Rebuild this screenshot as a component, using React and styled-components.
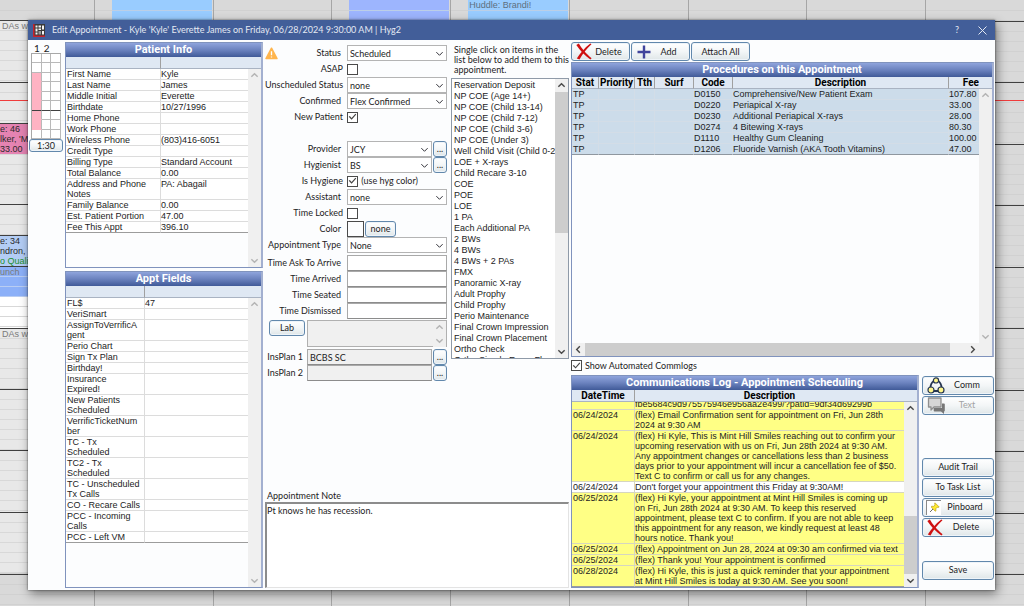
import React from "react";
import styled, { createGlobalStyle, css } from "styled-components";

const GlobalStyle = createGlobalStyle`
  *, *::before, *::after { box-sizing: border-box; }
  body { margin: 0; background: #d9d9d9; }
  body, button, input, select, textarea {
    font-family: "Lato", "Liberation Sans", sans-serif;
    font-size: 9px;
    line-height: 10px;
    color: #1c1c24;
  }
`;

const gridFont = css`
  font-family: "Liberation Sans", Arial, sans-serif;
  font-size: 9px;
  line-height: 10px;
`;

/* ---------- schedule behind the dialog ---------- */

const Desktop = styled.div`
  position: relative;
  min-height: 100vh;
  display: flex;
  padding: 20px 29px 16px 28px;
  overflow: hidden;
`;

const Schedule = styled.div`
  position: absolute;
  inset: 0;
  display: grid;
`;

const Hours = styled.div`
  grid-area: 1 / 1;
  display: grid;
  grid-template-rows: 21px repeat(9, 1fr) 32px;
`;

const Hour = styled.div`
  border-top: 1px solid ${(p) => (p.$first ? "#d9d9d9" : "#404040")};
  background: repeating-linear-gradient(#d9d9d9 0 9px, #d1d1d1 9px 10px);
`;

const Operatories = styled.div`
  grid-area: 1 / 1;
  display: grid;
  grid-template-columns: 95px repeat(7, 1fr) 98px;
`;

const Operatory = styled.div`
  border-right: 1px solid #a6a6a6;
  padding-right: 1px;
`;

const OpBlock = styled.div`
  height: 21px;
  margin-left: 17px;
  padding-left: 1px;
  background: repeating-linear-gradient(${(p) => p.$color} 0 10px, #bccfe6 10px 11px);
  color: #5d6f80;
  ${gridFont}
`;

const NowLine = styled.div`
  grid-area: 1 / 1;
  margin-top: 100px;
  height: 1px;
  background: #f03c3c;
`;

const DayColumn = styled.div`
  grid-area: 1 / 1;
  width: 28px;
  padding-top: 20px;
  overflow: hidden;
`;

const DayBlock = styled.div`
  height: ${(p) => p.$h}px;
  border-top: ${(p) => p.$line || "1px solid #404040"};
  background: repeating-linear-gradient(${(p) => p.$color || "#e8e8e8"} 0 9px, ${(p) => p.$rule || "#d8d8d8"} 9px 10px);
  color: ${(p) => p.$ink || "#7a7a7a"};
  padding-left: ${(p) => p.$pad || 0}px;
  white-space: pre;
  ${gridFont}
`;

const Good = styled.span`
  color: #1d8f2c;
`;

/* ---------- dialog ---------- */

const Dialog = styled.section`
  position: relative;
  flex: 1;
  min-width: 0;
  display: flex;
  flex-direction: column;
  background: #fcfdfe;
  box-shadow: 0 0 2px rgba(0, 0, 0, 0.6), 2px 4px 10px rgba(0, 0, 0, 0.45);
`;

const TitleBar = styled.header`
  height: 20px;
  display: flex;
  align-items: center;
  padding: 0 8px 0 5px;
  background: #425e99;
  color: #e4e9f3;
`;

const TitleText = styled.h1`
  margin: 0 auto 0 7px;
  font: 400 9px/12px "Lato", sans-serif;
`;

const TitleButton = styled.button`
  display: grid;
  place-items: center;
  width: 26px;
  height: 18px;
  padding: 0;
  border: 0;
  background: none;
  color: inherit;
  &:last-child { width: 9px; margin-left: 8px; }
`;

const Body = styled.main`
  flex: 1;
  display: grid;
  grid-template-columns: 34px minmax(0, 198fr) minmax(0, 304fr) minmax(0, 423fr);
  gap: 2px;
  padding: 2px 1px;
`;

const Stack = styled.div`
  display: flex;
  flex-direction: column;
  min-width: 0;
  gap: ${(p) => p.$gap || 0}px;
`;

/* ---------- time bar ---------- */

const TimeBar = styled.div`
  display: flex;
  flex-direction: column;
  align-items: center;
`;

const TimeBarHead = styled.div`
  display: flex;
  gap: 4px;
  width: 28px;
  height: 11px;
  padding-left: 2px;
  font: 10px/12px "Lato", sans-serif;
`;

const Pattern = styled.div`
  display: grid;
  grid-template-columns: repeat(3, 1fr);
  grid-template-rows: repeat(9, 1fr);
  width: 30px;
  height: 86px;
  border: solid #a8a8a8;
  border-width: 1px 0 0 1px;
`;

const PatternCell = styled.div`
  background: ${(p) => (p.$on ? "#ffb3c3" : "#fff")};
  border-right: 1px solid #b9b9b9;
  border-bottom: 1px solid ${(p) => (p.$dark ? "#404040" : p.$on ? "#ffb3c3" : "#b9b9b9")};
`;

/* ---------- buttons and fields ---------- */

const Button = styled.button`
  display: flex;
  align-items: center;
  justify-content: ${(p) => (p.$icon ? "flex-start" : "center")};
  width: ${(p) => (p.$w ? p.$w + "px" : "auto")};
  height: ${(p) => p.$h || 19}px;
  margin-top: ${(p) => p.$gap || 0}px;
  padding: 0 ${(p) => (p.$icon ? 4 : 0)}px;
  border: 1px solid #6288ac;
  border-radius: 3px;
  box-shadow: inset 0 0 0 1px #eef4f9;
  background: linear-gradient(#ffffff, #f3f6f7 50%, #dfe6e8);
  color: ${(p) => (p.disabled ? "#a3a3a3" : "#1c1c24")};
  svg { flex: none; }
  span { flex: 1; text-align: center; }
`;

const inputBox = css`
  min-width: 0;
  height: 16px;
  margin: 0;
  padding: 0 2px;
  border: 1px solid #a9a9a9;
  border-radius: 0;
  background: #fff;
  outline: 0;
`;

const Field = styled.input`
  ${inputBox}
  flex: 1;
  border-bottom-color: #8c8c8c;
  background: ${(p) => (p.readOnly ? "#f0f0f0" : "#fff")};
`;

const SelectWrap = styled.div`
  flex: 1;
  min-width: 0;
  display: grid;
  align-items: center;
  > * { grid-area: 1 / 1; }
  > svg { justify-self: end; margin-right: 3px; pointer-events: none; }
`;

const SelectBox = styled.select`
  ${inputBox}
  width: 100%;
  padding-top: 1px;
  appearance: none;
  border-color: #b4b4b4;
`;

const Check = styled.input.attrs({ type: "checkbox" })`
  appearance: none;
  display: grid;
  place-items: center;
  flex: none;
  width: 11px;
  height: 11px;
  margin: 0;
  border: 1px solid #4a4a4a;
  background: #fff;
  &:checked::before {
    content: "";
    width: 9px;
    height: 9px;
    background: #444;
    clip-path: polygon(8% 48%, 20% 40%, 40% 62%, 82% 14%, 92% 22%, 40% 80%);
  }
`;

const Form = styled.form`
  flex: none;
  width: 182px;
`;

const FormRow = styled.div`
  display: flex;
  align-items: ${(p) => (p.$top ? "flex-start" : "center")};
  gap: 1px;
  margin-top: ${(p) => p.$gap || 0}px;
`;

const LabelCell = styled.div`
  flex: none;
  width: ${(p) => p.$w || 81}px;
  min-height: 16px;
  display: flex;
  align-items: center;
  label { margin-left: auto; padding-right: ${(p) => p.$pad || 5}px; white-space: nowrap; }
`;

const Swatch = styled.input`
  width: 17px;
  height: 16px;
  padding: 0;
  border: 1px solid #4a4a4a;
  background: #fcfdfe;
`;

const LabNote = styled.div`
  flex: 1;
  display: flex;
  height: 27px;
  margin-left: 1px;
  border: 1px solid #b0b0b0;
  background: #f0f0f0;
  textarea { flex: 1; min-width: 0; border: 0; background: none; resize: none; padding: 0; }
`;

const TopPart = styled.div`
  display: flex;
  gap: 4px;
  padding-top: 3px;
  align-items: flex-start;
`;

const QuickAdd = styled.div`
  flex: 1;
  min-width: 0;
  p { margin: 0 0 3px; padding-left: 3px; white-space: pre; }
`;

const ListBox = styled.div`
  display: flex;
  height: 281px;
  border: 1px solid #8f9aa8;
  background: #fff;
  overflow: hidden;
  ul {
    flex: 1;
    min-width: 0;
    margin: 0;
    padding: 1px 0 0 2px;
    list-style: none;
    overflow: hidden;
    white-space: nowrap;
    ${gridFont}
    line-height: 11px;
  }
`;

const NoteLabel = styled.label`
  margin-top: auto;
  padding-left: 2px;
  line-height: 12px;
`;

const Note = styled.textarea`
  height: 86px;
  padding: 2px 0;
  border: 1px solid #e3e3e3;
  border-top: 2px solid #8c8c8c;
  border-left: 2px solid #8c8c8c;
  background: #fff;
  resize: none;
  outline: 0;
`;

/* ---------- grids ---------- */

const Panel = styled.section`
  flex: ${(p) => p.$grow} 1 0;
  display: flex;
  flex-direction: column;
  min-height: 0;
  min-width: 0;
  border: 1px solid #8093bd;
  border-right-width: 2px;
  border-right-color: #a3b0d0;
  background: #fcfdfe;
`;

const PanelTitle = styled.h2`
  height: 14px;
  margin: 0;
  text-align: center;
  font: 700 11px/14px Roboto, "Liberation Sans", sans-serif;
  color: #fff;
  background: linear-gradient(#8fa4dc, #6b82be 50%, #405a98);
`;

const PanelBody = styled.div`
  flex: 1;
  display: flex;
  min-height: 0;
`;

const TableArea = styled.div`
  flex: 1;
  min-width: 0;
  overflow: hidden;
`;

const Table = styled.table`
  width: 100%;
  table-layout: fixed;
  border-collapse: separate;
  border-spacing: 0;
  ${gridFont}
  th {
    height: 12px;
    padding: 0;
    background: #dfe8f3;
    border-bottom: 1px solid #a9b3c2;
    font: 700 10px/11px Roboto, "Liberation Sans", sans-serif;
    color: #000;
    white-space: nowrap;
  }
  th + th { border-left: 1px solid #a0a0a0; }
  td {
    padding: 0 0 0 1px;
    vertical-align: top;
    white-space: pre;
    border-bottom: 1px solid #dcdcdc;
  }
  td + td { padding-left: 0; border-left: 1px solid #dcdcdc; }
  tbody tr:last-child td { border-bottom-color: #9c9c9c; }
`;

const PlainRow = styled.tr`
  background: #fff;
`;

const SelectedRow = styled.tr`
  background: #ccdcea;
  && td { border-color: #d3dde7; }
  &&:last-child td { border-bottom-color: #8f979f; }
`;

const LogRow = styled.tr`
  background: ${(p) => (p.$auto ? "#ffff85" : "#fff")};
  && td { border-color: #d6d6c0; }
`;

const CutLine = styled.div`
  display: flex;
  align-items: flex-end;
  height: 7px;
  overflow: hidden;
`;

/* ---------- scroll bars ---------- */

const ScrollColumn = styled.div`
  flex: none;
  width: 13px;
  display: flex;
  flex-direction: column;
`;

const ScrollCap = styled.div`
  height: 12px;
  background: #dfe8f3;
  border-bottom: 1px solid #a9b3c2;
`;

const ScrollTrack = styled.div`
  flex: 1;
  display: flex;
  flex-direction: ${(p) => (p.$across ? "row" : "column")};
  justify-content: space-between;
  align-items: center;
  background: #f0f0f0;
  color: ${(p) => (p.$active ? "#4a4a4a" : "#b4b4b4")};
  ${(p) => p.$across && "flex: none; height: 13px;"}
  svg { flex: none; margin: 2px; }
`;

const Spacer = styled.div`
  flex: ${(p) => p.$part} 1 0;
`;

const Thumb = styled.div`
  flex: ${(p) => p.$part} 1 0;
  align-self: stretch;
  background: #cdcdcd;
`;

/* ---------- right side ---------- */

const Toolbar = styled.div`
  display: flex;
  gap: 1px;
  height: 20px;
`;

const AutoLogs = styled.label`
  display: flex;
  align-items: center;
  gap: 3px;
  height: 18px;
`;

const LogPart = styled.div`
  flex: 214 1 0;
  display: flex;
  gap: 3px;
  min-height: 0;
`;

const Actions = styled.div`
  flex: none;
  width: 72px;
  display: flex;
  flex-direction: column;
  align-items: stretch;
  padding-top: 1px;
`;

const PinBox = styled.i`
  flex: none;
  display: grid;
  place-items: center;
  width: 15px;
  height: 15px;
  margin-left: -1px;
  border: solid #8a8a8a;
  border-width: 1px 0 0 1px;
  background: #fff;
`;

/* ---------- icons ---------- */

const paths = {
  down: "M1.5 3.5 5 7l3.5-3.5",
  up: "M1.5 6.5 5 3l3.5 3.5",
  left: "M6.5 1.5 3 5l3.5 3.5",
  right: "M3.5 1.5 7 5 3.5 8.5",
};

const Arrow = ({ dir, size = 9, weight = 1.6 }) => (
  <svg width={size} height={size} viewBox="0 0 10 10" fill="none" stroke="currentColor" strokeWidth={weight} aria-hidden="true">
    <path d={paths[dir]} />
  </svg>
);

const RedCross = () => (
  <svg width="16" height="17" viewBox="0 0 16 17" aria-hidden="true">
    <path d="M.3 2 2.800.6C5.200 4.600 10 11 15.600 15.200L14.400 16.600C9.300 13 3.800 7.500.3 2Z" fill="#cf1111" />
    <path d="M14.300.4 15.500 1.200C10.700 5.500 6.300 11 3.500 16.400L.8 15.600C3.800 10.500 8.300 5 14.300.4Z" fill="#cf1111" />
  </svg>
);

const Plus = () => (
  <svg width="16" height="14" viewBox="0 0 16 14" stroke="#40449c" strokeWidth="2.4" aria-hidden="true">
    <path d="M8 .5v13M1.500 7h13" />
  </svg>
);

const CommIcon = () => (
  <svg width="18" height="17" viewBox="0 0 18 17" aria-hidden="true">
    <g fill="none" stroke="#26354f" strokeWidth="1.8">
      <path d="M6.800 4C4.500 5.500 3.500 8 3.500 11M11.200 4c2.300 1.500 3.300 4 3.300 7M6.500 14h5" />
    </g>
    <g fill="#fff78c" stroke="#26354f" strokeWidth="1.200">
      <circle cx="9" cy="3.400" r="2.600" />
      <circle cx="4" cy="13" r="3" />
      <circle cx="14" cy="13" r="3" />
    </g>
  </svg>
);

const ChatIcon = () => (
  <svg width="18" height="17" viewBox="0 0 18 17" aria-hidden="true">
    <path d="M1.500 1h12.500v9H7L4 13V10H1.500Z" fill="#d6d6d6" stroke="#8f8f8f" strokeWidth="1.300" strokeLinejoin="round" />
    <path d="M15 6.500h2q.8 0 .8.8v6.400q0 .8-.8.8V17L14 14.500H7.500q-.8 0-.8-.8V11H15Z" fill="#777" />
  </svg>
);

const PinIcon = () => (
  <svg width="11" height="11" viewBox="0 0 11 11" aria-hidden="true">
    <path d="M1 10 4.500 6.500" stroke="#6b6b6b" />
    <path d="M6 .8 10.200 5 9 5.600 8.300 5.200 6.800 6.800 7 8.800 6.200 9.200 2.200 5 2.700 4.200 4.700 4.400 6 2.800 5.500 1.600Z" fill="#ffe92e" stroke="#a98f16" strokeWidth=".6" />
  </svg>
);

const WarningIcon = () => (
  <svg width="13" height="13" viewBox="0 0 13 13" aria-hidden="true">
    <path d="M6.500 1.200 12 11.500H1Z" fill="#ffb54d" stroke="#ffb54d" strokeWidth="1.500" strokeLinejoin="round" />
    <path d="M6.500 4.200v4M6.500 9.400v1.200" stroke="#fff" strokeWidth="1.300" />
  </svg>
);

const AppIcon = () => (
  <svg width="12" height="13" viewBox="0 0 12 13" aria-hidden="true">
    <rect width="12" height="13" fill="#3a3a3a" />
    <path d="M0 0h1.500v11.500H12V13H0Z" fill="#c8232c" />
    <path d="M2.500 1.500h2v2h-2zM5.500 1.500h2.500v2H5.500zM9 1.500h2v4H9zM2.500 4.500h2v3h-2zM5.500 4.500h2.500v1.500H5.500zM2.500 8.500h2v2h-2zM9 7h2v3.500H9z" fill="#f4f4f4" />
    <path d="M5.500 7H8v3.500H5.500z" fill="#999" />
  </svg>
);

/* ---------- data ---------- */

const patientInfo = [
  ["First Name", "Kyle"],
  ["Last Name", "James"],
  ["Middle Initial", "Everette"],
  ["Birthdate", "10/27/1996"],
  ["Home Phone", ""],
  ["Work Phone", ""],
  ["Wireless Phone", "(803)416-6051"],
  ["Credit Type", ""],
  ["Billing Type", "Standard Account"],
  ["Total Balance", "0.00"],
  ["Address and Phone\nNotes", "PA: Abagail"],
  ["Family Balance", "0.00"],
  ["Est. Patient Portion", "47.00"],
  ["Fee This Appt", "396.10"],
];

const apptFields = [
  ["FL$", "47"],
  ["VeriSmart", ""],
  ["AssignToVerrificA\ngent", ""],
  ["Perio Chart", ""],
  ["Sign Tx Plan", ""],
  ["Birthday!", ""],
  ["Insurance\nExpired!", ""],
  ["New Patients\nScheduled", ""],
  ["VerrificTicketNum\nber", ""],
  ["TC - Tx\nScheduled", ""],
  ["TC2 - Tx\nScheduled", ""],
  ["TC - Unscheduled\nTx Calls", ""],
  ["CO - Recare Calls", ""],
  ["PCC - Incoming\nCalls", ""],
  ["PCC - Left VM", ""],
];

const quickAdd = [
  "Reservation Deposit", "NP COE (Age 14+)", "NP COE (Child 13-14)", "NP COE (Child 7-12)",
  "NP COE (Child 3-6)", "NP COE (Under 3)", "Well Child Visit (Child 0-2", "LOE + X-rays",
  "Child Recare 3-10", "COE", "POE", "LOE", "1 PA", "Each Additional PA", "2 BWs", "4 BWs",
  "4 BWs + 2 PAs", "FMX", "Panoramic X-ray", "Adult Prophy", "Child Prophy",
  "Perio Maintenance", "Final Crown Impression", "Final Crown Placement", "Ortho Check",
  "Ortho Simple Exam Fl",
];

const procedures = [
  ["D0150", "Comprehensive/New Patient Exam", "107.80"],
  ["D0220", "Periapical X-ray", "33.00"],
  ["D0230", "Additional Periapical X-rays", "28.00"],
  ["D0274", "4 Bitewing X-rays", "80.30"],
  ["D1110", "Healthy Gum Cleaning", "100.00"],
  ["D1206", "Fluoride Varnish (AKA Tooth Vitamins)", "47.00"],
];

const commLog = [
  ["06/24/2024", "(flex) Email Confirmation sent for appointment on Fri, Jun 28th\n2024 at 9:30 AM", true],
  ["06/24/2024", "(flex) Hi Kyle, This is Mint Hill Smiles reaching out to confirm your\nupcoming reservation with us on Fri, Jun 28th 2024 at 9:30 AM.\nAny appointment changes or cancellations less than 2 business\ndays prior to your appointment will incur a cancellation fee of $50.\nText C to confirm or call us for any changes.", true],
  ["06/24/2024", "Don't forget your appointment this Friday at 9:30AM!", false],
  ["06/25/2024", "(flex) Hi Kyle, your appointment at Mint Hill Smiles is coming up\non Fri, Jun 28th 2024 at 9:30 AM. To keep this reserved\nappointment, please text C to confirm. If you are not able to keep\nthis appointment for any reason, we kindly request at least 48\nhours notice. Thank you!", true],
  ["06/25/2024", "(flex) Appointment on Jun 28, 2024 at 09:30 am confirmed via text", true],
  ["06/25/2024", "(flex) Thank you! Your appointment is confirmed", true],
  ["06/28/2024", "(flex) Hi Kyle, this is just a quick reminder that your appointment\nat Mint Hill Smiles is today at 9:30 AM. See you soon!", true],
];

/* ---------- composed parts ---------- */

const SideScroll = ({ cap, active, before = 0, thumb = 0, after = 1 }) => (
  <ScrollColumn>
    {cap && <ScrollCap />}
    <ScrollTrack $active={active}>
      <Arrow dir="up" />
      {before > 0 && <Spacer $part={before} />}
      {thumb > 0 && <Thumb $part={thumb} />}
      {after > 0 && <Spacer $part={after} />}
      <Arrow dir="down" />
    </ScrollTrack>
  </ScrollColumn>
);

const PairPanel = ({ title, rows, grow, first }) => (
  <Panel $grow={grow}>
    <PanelTitle>{title}</PanelTitle>
    <PanelBody>
      <TableArea>
        <Table>
          <colgroup><col width={first} /><col /></colgroup>
          <thead><tr><th aria-label="Field" /><th aria-label="Value" /></tr></thead>
          <tbody>
            {rows.map(([name, value]) => (
              <PlainRow key={name}><td>{name}</td><td>{value || " "}</td></PlainRow>
            ))}
          </tbody>
        </Table>
      </TableArea>
      <SideScroll cap />
    </PanelBody>
  </Panel>
);

const Combo = ({ id, value }) => (
  <SelectWrap>
    <SelectBox id={id} defaultValue={value}><option>{value}</option></SelectBox>
    <Arrow dir="down" weight={1} />
  </SelectWrap>
);

const Row = ({ id, label, gap, pad, lead, width, top, children }) => (
  <FormRow $gap={gap} $top={top}>
    <LabelCell $pad={pad} $w={width}>{lead}<label htmlFor={id}>{label}</label></LabelCell>
    {children}
  </FormRow>
);

const More = ({ of }) => <Button type="button" $w={14} $h={16} aria-label={`Choose ${of}`}>...</Button>;

export default function App() {
  return (
    <Desktop>
      <GlobalStyle />
      <Schedule>
        <Hours>{Array.from({ length: 11 }, (_, i) => <Hour key={i} $first={i === 0} />)}</Hours>
        <Operatories>
          <Operatory />
          <Operatory><OpBlock $color="#99ccff" /></Operatory>
          <Operatory />
          <Operatory><OpBlock $color="#9db5fe" /></Operatory>
          <Operatory><OpBlock $color="#99ccff">Huddle: Brandi!</OpBlock></Operatory>
          <Operatory /><Operatory /><Operatory />
        </Operatories>
        <NowLine />
        <DayColumn>
          <DayBlock $h={62} $pad={2}>DAs w</DayBlock>
          <DayBlock $h={18} />
          <DayBlock $h={23} $line="1px solid #f03c3c" />
          <DayBlock $h={31} $color="#e583b2" $rule="#e583b2" $ink="#2b2b2b">{"e: 46\nlker, 'M\n33.00"}</DayBlock>
          <DayBlock $h={50} $line="1px solid #d8d8d8" />
          <DayBlock $h={31} />
          <DayBlock $h={31} $color="#b3cdf5" $rule="#b3cdf5" $ink="#2b2b2b">{"e: 34\nndron, '\n"}<Good>o Qualit</Good></DayBlock>
          <DayBlock $h={31} $color="#8cb0f8" $rule="#b9cdf2">unch</DayBlock>
          <DayBlock $h={31} $color="#fff" $line="0" />
          <DayBlock $h={61} $pad={2}>DAs w</DayBlock>
          <DayBlock $h={61} />
          <DayBlock $h={62} />
          <DayBlock $h={61} />
        </DayColumn>
      </Schedule>

      <Dialog role="dialog" aria-labelledby="dialog-title">
        <TitleBar>
          <AppIcon />
          <TitleText id="dialog-title">Edit Appointment - Kyle 'Kyle' Everette James on Friday, 06/28/2024 9:30:00 AM | Hyg2</TitleText>
          <TitleButton type="button">?</TitleButton>
          <TitleButton type="button" aria-label="Close">
            <svg width="9" height="9" viewBox="0 0 9 9" stroke="currentColor" aria-hidden="true"><path d="m.5.5 8 8M8.500.5l-8 8" /></svg>
          </TitleButton>
        </TitleBar>

        <Body>
          <TimeBar>
            <TimeBarHead><span>1</span><span>2</span></TimeBarHead>
            <Pattern>
              {Array.from({ length: 27 }, (_, i) => {
                const r = Math.floor(i / 3);
                return <PatternCell key={i} $on={i % 3 === 0 && r > 1 && r < 8} $dark={r === 5} />;
              })}
            </Pattern>
            <Button type="button" $w={34} $h={13}>1:30</Button>
          </TimeBar>

          <Stack $gap={3}>
            <PairPanel title="Patient Info" rows={patientInfo} grow={226} first={94} />
            <PairPanel title="Appt Fields" rows={apptFields} grow={317} first={78} />
          </Stack>

          <Stack>
            <TopPart>
              <Form>
                <Row id="status" label="Status" lead={<WarningIcon />}><Combo id="status" value="Scheduled" /></Row>
                <Row id="asap" label="ASAP" pad={3}><Check id="asap" /></Row>
                <Row id="unsched" label="Unscheduled Status"><Combo id="unsched" value="none" /></Row>
                <Row id="confirmed" label="Confirmed"><Combo id="confirmed" value="Flex Confirmed" /></Row>
                <Row id="newpat" label="New Patient" pad={3}><Check id="newpat" defaultChecked /></Row>
                <Row id="provider" label="Provider" gap={16}><Combo id="provider" value="JCY" /><More of="provider" /></Row>
                <Row id="hygienist" label="Hygienist"><Combo id="hygienist" value="BS" /><More of="hygienist" /></Row>
                <Row id="ishyg" label="Is Hygiene" pad={3}><Check id="ishyg" defaultChecked /><span>&nbsp;(use hyg color)</span></Row>
                <Row id="assistant" label="Assistant"><Combo id="assistant" value="none" /></Row>
                <Row id="locked" label="Time Locked" pad={3}><Check id="locked" /></Row>
                <Row id="color" label="Color"><Swatch id="color" readOnly /><Button type="button" $w={31} $h={16}>none</Button></Row>
                <Row id="type" label="Appointment Type"><Combo id="type" value="None" /></Row>
                <Row id="ask" label="Time Ask To Arrive" gap={2}><Field id="ask" /></Row>
                <Row id="arrived" label="Time Arrived"><Field id="arrived" /></Row>
                <Row id="seated" label="Time Seated"><Field id="seated" /></Row>
                <Row id="dismissed" label="Time Dismissed"><Field id="dismissed" /></Row>
                <FormRow $top $gap={1}>
                  <LabelCell $w={40}>
                    <Spacer $part={1} /><Button type="button" $w={36} $h={16}>Lab</Button>
                  </LabelCell>
                  <LabNote><textarea aria-label="Lab case" readOnly /><SideScroll /></LabNote>
                </FormRow>
                <Row id="ins1" label="InsPlan 1" width={41} pad={3} gap={2}><Field id="ins1" readOnly value="BCBS SC" /><More of="plan 1" /></Row>
                <Row id="ins2" label="InsPlan 2" width={41} pad={3}><Field id="ins2" readOnly value="" /><More of="plan 2" /></Row>
              </Form>
              <QuickAdd>
                <p>{"Single click on items in the\nlist below to add them to this\nappointment."}</p>
                <ListBox>
                  <ul>{quickAdd.map((item) => <li key={item}>{item}</li>)}</ul>
                  <SideScroll active thumb={141} after={112} />
                </ListBox>
              </QuickAdd>
            </TopPart>
            <NoteLabel htmlFor="note">Appointment Note</NoteLabel>
            <Note id="note" defaultValue="Pt knows he has recession." />
          </Stack>

          <Stack>
            <Toolbar>
              <Button type="button" $w={59} $icon><RedCross /><span>Delete</span></Button>
              <Button type="button" $w={59} $icon><Plus /><span>Add</span></Button>
              <Button type="button" $w={59}>Attach All</Button>
            </Toolbar>
            <Panel $grow={294}>
              <PanelTitle>Procedures on this Appointment</PanelTitle>
              <PanelBody>
                <TableArea>
                  <Table>
                    <colgroup>
                      <col width="26" /><col width="36" /><col width="20" /><col width="39" />
                      <col width="39" /><col /><col width="31" />
                    </colgroup>
                    <thead>
                      <tr><th>Stat</th><th>Priority</th><th>Tth</th><th>Surf</th><th>Code</th><th>Description</th><th align="right">Fee</th></tr>
                    </thead>
                    <tbody>
                      {procedures.map(([code, text, fee]) => (
                        <SelectedRow key={code}><td>TP</td><td /><td /><td /><td>{code}</td><td>{text}</td><td>{fee}</td></SelectedRow>
                      ))}
                    </tbody>
                  </Table>
                </TableArea>
                <SideScroll cap />
              </PanelBody>
              <ScrollTrack $across $active>
                <Arrow dir="left" />
                <Thumb $part={367} />
                <Spacer $part={16} />
                <Arrow dir="right" />
                <Spacer $part={13} />
              </ScrollTrack>
            </Panel>
            <AutoLogs><Check defaultChecked />Show Automated Commlogs</AutoLogs>
            <LogPart>
              <Panel $grow={1}>
                <PanelTitle>Communications Log - Appointment Scheduling</PanelTitle>
                <PanelBody>
                  <TableArea>
                    <Table>
                      <colgroup><col width="62" /><col /></colgroup>
                      <thead><tr><th>DateTime</th><th>Description</th></tr></thead>
                      <tbody>
                        <LogRow $auto><td /><td><CutLine>fbe5684c9d975575946e956aa2e499/?patid=9df34d69299b</CutLine></td></LogRow>
                        {commLog.map(([date, text, auto]) => (
                          <LogRow key={text} $auto={auto}><td>{date}</td><td>{text}</td></LogRow>
                        ))}
                      </tbody>
                    </Table>
                  </TableArea>
                  <SideScroll cap active before={101} thumb={58} after={0} />
                </PanelBody>
              </Panel>
              <Actions>
                <Button type="button" $icon><CommIcon /><span>Comm</span></Button>
                <Button type="button" $icon $gap={1} disabled><ChatIcon /><span>Text</span></Button>
                <Button type="button" $gap={43}>Audit Trail</Button>
                <Button type="button" $gap={1}>To Task List</Button>
                <Button type="button" $icon $gap={1}><PinBox><PinIcon /></PinBox><span>Pinboard</span></Button>
                <Button type="button" $icon $gap={1}><RedCross /><span>Delete</span></Button>
                <Button type="button" $gap={24}>Save</Button>
              </Actions>
            </LogPart>
          </Stack>
        </Body>
      </Dialog>
    </Desktop>
  );
}
